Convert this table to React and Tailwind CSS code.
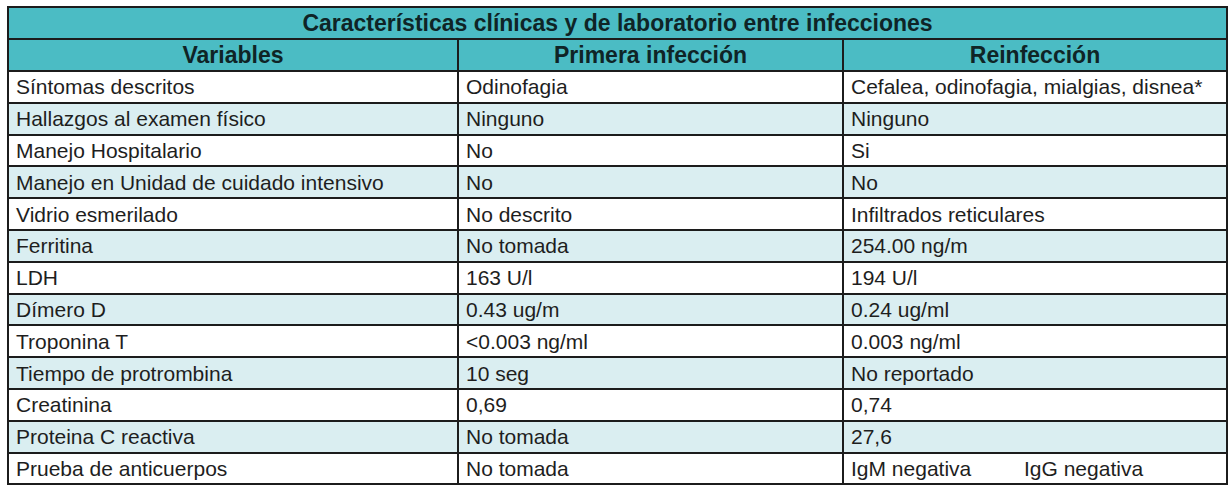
import React from 'react';

const rows = [
  ['Síntomas descritos', 'Odinofagia', 'Cefalea, odinofagia, mialgias, disnea*'],
  ['Hallazgos al examen físico', 'Ninguno', 'Ninguno'],
  ['Manejo Hospitalario', 'No', 'Si'],
  ['Manejo en Unidad de cuidado intensivo', 'No', 'No'],
  ['Vidrio esmerilado', 'No descrito', 'Infiltrados reticulares'],
  ['Ferritina', 'No tomada', '254.00 ng/m'],
  ['LDH', '163 U/l', '194 U/l'],
  ['Dímero D', '0.43 ug/m', '0.24 ug/ml'],
  ['Troponina T', '<0.003 ng/ml', '0.003 ng/ml'],
  ['Tiempo de protrombina', '10 seg', 'No reportado'],
  ['Creatinina', '0,69', '0,74'],
  ['Proteina C reactiva', 'No tomada', '27,6'],
  ['Prueba de anticuerpos', 'No tomada', null],
];

const cell = 'border-2 border-[#1c1c1c] h-[31.8px] pl-[7px] pr-[4px] py-0 text-left align-middle whitespace-nowrap';
const head = 'border-2 border-[#1c1c1c] h-[32px] p-0 font-bold text-center text-[23px] text-[#0f2426]';

export default function App() {
  return (
    <div className="bg-white w-[1232px] h-[491px] pt-[6px] pl-[7px]" style={{ fontFamily: '"Liberation Sans", Arial, sans-serif' }}>
      <table className="border-collapse w-[1219px] table-fixed text-[21px] leading-none text-[#1e1e1e]">
        <colgroup>
          <col className="w-[450px]" />
          <col className="w-[385px]" />
          <col className="w-[384px]" />
        </colgroup>
        <thead>
          <tr className="bg-[#4bbcc4]">
            <th colSpan={3} className={head}>
              Características clínicas y de laboratorio entre infecciones
            </th>
          </tr>
          <tr className="bg-[#4bbcc4]">
            <th className={head}>Variables</th>
            <th className={head}>Primera infección</th>
            <th className={head}>Reinfección</th>
          </tr>
        </thead>
        <tbody>
          {rows.map((r, i) => (
            <tr key={i} className={i % 2 === 1 ? 'bg-[#daeef1]' : 'bg-white'}>
              <td className={cell}>{r[0]}</td>
              <td className={cell}>{r[1]}</td>
              <td className={cell}>
                {r[2] === null ? (
                  <div className="flex">
                    <span className="w-[173px]">IgM negativa</span>
                    <span>IgG negativa</span>
                  </div>
                ) : (
                  r[2]
                )}
              </td>
            </tr>
          ))}
        </tbody>
      </table>
    </div>
  );
}
